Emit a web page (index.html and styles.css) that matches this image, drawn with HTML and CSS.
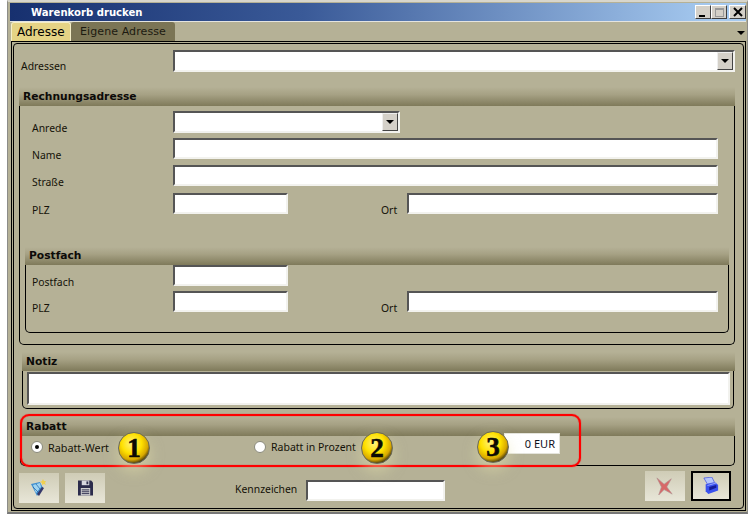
FILE: index.html
```html
<!DOCTYPE html>
<html lang="de">
<head>
<meta charset="utf-8">
<title>Warenkorb drucken</title>
<link rel="stylesheet" href="styles.css">
</head>
<body>
<div class="window">
  <div class="titlebar">
    <span class="title">Warenkorb drucken</span>
    <div class="winbtns">
      <span class="winbtn"><i class="min"></i></span>
      <span class="winbtn"><i class="max"></i></span>
      <span class="winbtn close"><svg width="12" height="12" viewBox="0 0 12 12"><path d="M2 2l8 8M10 2l-8 8" stroke="#000" stroke-width="2"/></svg></span>
    </div>
  </div>
  <div class="tabs">
    <span class="tab active">Adresse</span>
    <span class="tab">Eigene Adresse</span>
    <i class="tabmenu"></i>
  </div>
  <div class="panel-outer">
    <div class="panel">
      <div class="row top-row">
        <label class="lbl-top">Adressen</label>
        <div class="field select sel-wide"><span class="drop"><i></i></span></div>
      </div>

      <section class="group rechnung">
        <h2 class="ghead">Rechnungsadresse</h2>
        <div class="gbody rbody">
          <div class="row r-anrede"><label class="lbl">Anrede</label><div class="field select sel-anrede"><span class="drop"><i></i></span></div></div>
          <div class="row r-name"><label class="lbl">Name</label><div class="field w545"></div></div>
          <div class="row r-str"><label class="lbl">Straße</label><div class="field w545"></div></div>
          <div class="row r-plz"><label class="lbl">PLZ</label><div class="field w115"></div><label class="lbl-ort">Ort</label><div class="field w311"></div></div>

          <section class="group postfach">
            <h2 class="ghead ghead-sm">Postfach</h2>
            <div class="gbody pbody">
              <div class="row p-fach"><label class="lbl">Postfach</label><div class="field w115"></div></div>
              <div class="row p-plz"><label class="lbl">PLZ</label><div class="field w115"></div><label class="lbl-ort">Ort</label><div class="field w311"></div></div>
            </div>
          </section>
        </div>
      </section>

      <section class="group notiz">
        <h2 class="ghead">Notiz</h2>
        <div class="gbody nbody"><div class="field note"></div></div>
      </section>

      <section class="group rabatt">
        <h2 class="ghead ghead-ra">Rabatt</h2>
        <div class="gbody rabody">
          <span class="radio on"></span><span class="rlabel rl1">Rabatt-Wert</span>
          <span class="radio r2"></span><span class="rlabel rl2">Rabatt in Prozent</span>
          <div class="eur">0 EUR</div>
        </div>
      </section>

      <div class="footer">
        <button class="tool">
          <svg width="18" height="18" viewBox="0 0 18 18"><path d="M1 5l9-2 3 6-6 8z" fill="#3f8fd0"/><path d="M3 6l7-2 1 4-5 6z" fill="#9fd4f0"/><path d="M3 8l5 5M6 5l4 5" stroke="#1f60a8" stroke-width=".7"/><path d="M7 15l5-7 2 1-5 8z" fill="#34386a"/><path d="M13 0l1 2 2 0-1 2 1 2-2-1-2 1 0-2-2-1 2-1z" fill="#f0d050"/></svg>
        </button>
        <button class="tool t2">
          <svg width="15" height="16" viewBox="0 0 16 16"><path d="M0 0h14l2 2v14H0z" fill="#2c2c4c"/><path d="M4 0h8v5H4z" fill="#d8d8e0"/><path d="M9 1h2v3H9z" fill="#2c2c4c"/><path d="M3 8h10v8H3z" fill="#d0d0d0"/><path d="M4 10h8M4 12h8M4 14h8" stroke="#2c2c4c"/></svg>
        </button>
        <label class="kz">Kennzeichen</label>
        <div class="field kzf"></div>
        <button class="tool cancel">
          <svg width="18" height="18" viewBox="0 0 20 20"><path d="M1 1l8 7 8-6-5 9 6 8-9-5-6 6 3-9z" fill="#d86868" stroke="#b09090" stroke-width=".7"/></svg>
        </button>
        <button class="tool print">
          <svg width="16" height="18" viewBox="0 0 18 20"><path d="M1 1l9-1 3 6-8 2z" fill="#b8c8fc" stroke="#3040e0" stroke-width=".7"/><path d="M3 8l11-2 3 3v6l-11 4-3-3z" fill="#3b52ee"/><path d="M7 11l8-2v3l-8 3z" fill="#141c98"/><path d="M5 9.500l10-3" stroke="#a0b0ff"/></svg>
        </button>
      </div>
    </div>
  </div>

  <div class="callout"></div>
  <span class="badge b1">1</span>
  <span class="badge b2">2</span>
  <span class="badge b3">3</span>
</div>
</body>
</html>
```
FILE: styles.css
```css
* { box-sizing: border-box; }
html, body { margin: 0; padding: 0; }
body {
  width: 750px; height: 515px; background: #fff; overflow: hidden;
  font-family: "Noto Sans", sans-serif; font-size: 10.400px; color: #141208;
}
.window {
  position: relative; margin-left: 7px; width: 741px; height: 514px;
  background: #b5b196; border: 1px solid #8c8c88; border-top: 2px solid #d8d6cc;
  border-bottom: 2px solid #777; padding: 1px 0 0 2px;
}
.titlebar {
  height: 19px; margin-right: 1px; display: flex; align-items: center;
  padding-left: 21px;
  background: linear-gradient(90deg, #17306f 0%, #3a5a98 40%, #a6caf0 96%);
  border-bottom: 1px solid #e4e4e0;
}
.title { color: #fff; font: bold 10.100px "DejaVu Sans", sans-serif; }
.winbtns { margin-left: auto; display: flex; }
.winbtn {
  width: 16px; height: 14px; display: flex; align-items: center; justify-content: center;
  background: #d4d0c8; border: 1px solid; border-color: #fff #404040 #404040 #fff;
}
.winbtn.close { margin-left: 2px; width: 17px; }
.min { width: 6px; height: 2px; background: #000; margin: 7px 3px 0 0; }
.max { width: 9px; height: 9px; border: 1px solid #999; border-top-width: 2px; }
.tabs { height: 19px; display: flex; align-items: flex-end; padding-left: 1px; position: relative; }
.tab {
  height: 19px; padding: 3px 9px 0; font: 11px "DejaVu Sans", sans-serif; color: #1c1a10; letter-spacing: .1px;
  background: #7b7555; border-radius: 3px 3px 0 0; width: 104px;
}
.tab.active {
  background: #e5d385; color: #000; padding: 2px 5px 0; border: 1px solid #f4eec8; border-bottom: 0; width: 60px;
  font-size: 12px; letter-spacing: 0;
}
.tabmenu {
  position: absolute; right: 2px; top: 9px; width: 0; height: 0;
  border: 4px solid transparent; border-top: 4px solid #000; border-bottom: 0;
}
.panel-outer {
  height: 470px; width: 735px; margin-left: 1px; border: 1px solid #000; padding: 1px;
}
.panel {
  height: 466px; border: 1px solid #000; border-radius: 4px; padding-top: 6px;
}
.row { display: flex; align-items: flex-start; }
.lbl-top { width: 152px; margin-left: 7px; height: 22px; padding-top: 9px; line-height: 15px; }
.lbl { width: 141px; height: 21px; padding-top: 10px; line-height: 15px; }
.lbl-ort { width: 119px; height: 21px; padding: 10px 0 0 93px; line-height: 15px; }
.field {
  background: #fff; border: 2px solid; border-color: #555 #f2f2ee #f2f2ee #555; height: 21px; flex: none;
  position: relative;
}
.select { height: 22px; }
.sel-wide { width: 562px; }
.sel-anrede { width: 227px; }
.drop {
  position: absolute; right: 0; top: 0; width: 16px; height: 18px;
  background: #d4d0c8; border: 1px solid; border-color: #eee #444 #444 #eee;
  display: flex; align-items: center; justify-content: center;
}
.drop i { width: 0; height: 0; border: 4px solid transparent; border-top: 4px solid #000; border-bottom: 0; }
.w545 { width: 545px; }
.w115 { width: 115px; }
.w311 { width: 311px; }

.ghead {
  margin: 0; height: 19px; padding: 3px 0 0 4px; color: #0c0a08;
  font: bold 10.700px "DejaVu Sans", sans-serif;
  background: linear-gradient(#b5b196 0%, #a6a184 40%, #7f7a5a 100%);
}
.gbody { border: 1px solid #000; border-top: 0; border-radius: 0 0 5px 5px; }
.rechnung { margin: 15px 8px 0 5px; }
.rbody { height: 239px; padding: 5px 0 0 12px; }
.r-name { margin-top: 5px; }
.r-str { margin-top: 6px; }
.r-plz { margin-top: 7px; }
.postfach { margin: 33px 0 0 -7px; width: 704px; }
.ghead-sm { height: 18px; padding-top: 2px; }
.pbody { height: 68px; padding: 0 0 0 6px; }
.p-plz { margin-top: 5px; }
.notiz { margin: 7px 8px 0 8px; }
.nbody { height: 38px; padding: 1px 3px 0 4px; margin-right: 1px; }
.note { width: 703px; height: 33px; }
.rabatt { margin: 8px 8px 0 6px; }
.ghead-ra { padding-left: 6px; }
.rabody { height: 30px; position: relative; }
.radio {
  position: absolute; left: 10px; top: 5px; width: 12px; height: 12px; border-radius: 50%;
  background: #fff; border: 1px solid #8a8a7c;
}
.radio.on::after {
  content: ""; position: absolute; left: 3px; top: 3px; width: 4px; height: 4px; border-radius: 50%; background: #000;
}
.radio.r2 { left: 233px; }
.rlabel { position: absolute; top: 4px; line-height: 15px; }
.rl1 { left: 27px; font-size: 10.800px; }
.rl2 { left: 250px; font-size: 10.500px; }
.eur {
  position: absolute; left: 483px; top: -3px; width: 56px; height: 21px; background: #fff;
  border: 1px solid #e4e4dc; text-align: right; padding: 2px 4px 0 0; color: #10101c; line-height: 15px; font-size: 11px;
}
.footer { display: flex; align-items: flex-start; margin-top: 5px; padding-left: 5px; }
.tool {
  width: 40px; height: 30px; flex: none; padding: 0; display: flex; align-items: center; justify-content: center;
  border: 0; margin-top: 2px; background: linear-gradient(#cfccb6, #e8e6d8);
}
.t2 { margin-left: 6px; }
.kz { margin-left: 130px; padding-top: 11px; width: 71px; line-height: 15px; }
.kzf { width: 139px; margin-top: 9px; }
.cancel { margin-left: 200px; margin-top: 0; }
.print { margin-left: 6px; margin-top: 0; border: 2px solid #000; }

.callout {
  position: absolute; left: 12px; top: 412px; width: 561px; height: 53px;
  border: 2px solid #f00; border-radius: 9px; box-shadow: 0 0 1px #f00, inset 0 0 1px #f00;
}
.badge {
  position: absolute; width: 32px; height: 32px; border-radius: 50%; top: 430px;
  background: radial-gradient(circle at 42% 35%, #fff27a 0%, #ffe100 38%, #d8a800 62%, #2a2410 80%, #000 100%);
  border: 1px solid #6a6a58;
  font: 900 27px/30px "Liberation Serif", serif; text-align: center; color: #0c0a04;
  -webkit-text-stroke: .6px #0c0a04;
  box-shadow: 0 7px 14px rgba(230,225,170,.55);
}
.b1 { left: 110px; }
.b2 { left: 353px; }
.b3 { left: 469px; top: 429px; }
```
